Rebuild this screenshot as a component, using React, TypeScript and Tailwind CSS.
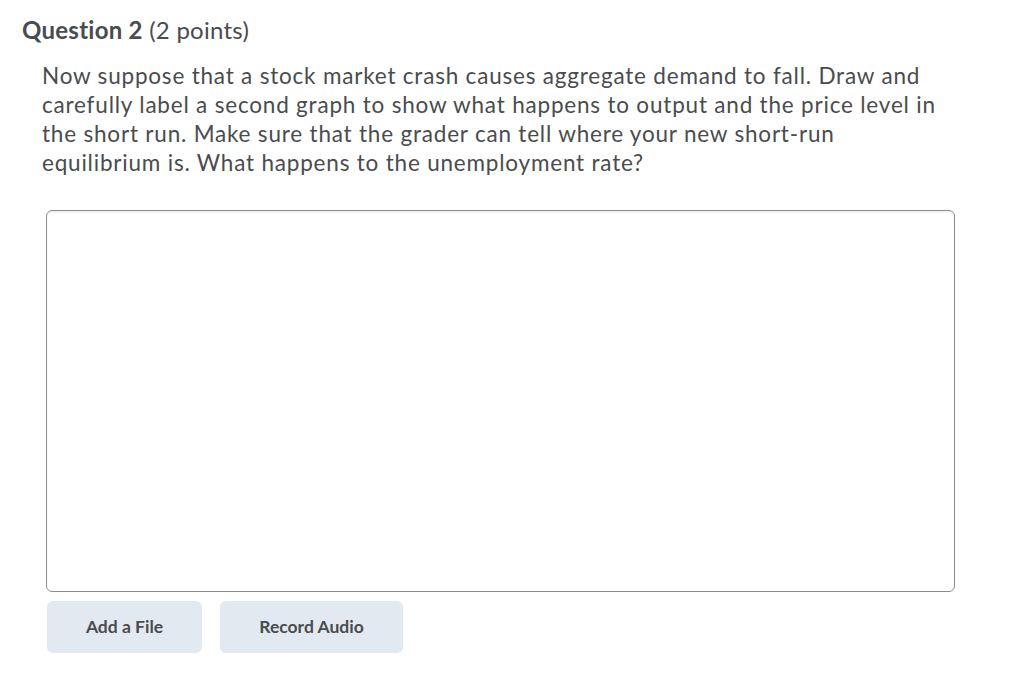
import React from "react";

export default function App() {
  return (
    <div
      className="w-[1024px] h-[685px] bg-white text-[#494c4e] overflow-hidden"
      style={{ fontFamily: "Lato, 'Noto Sans', sans-serif" }}
    >
      <div className="pl-[22px] pt-[15px]">
        <h2 className="text-[24px] leading-[30px] tracking-[0.25px] whitespace-nowrap">
          <span className="font-bold">Question 2</span>{" "}
          <span className="font-normal">(2 points)</span>
        </h2>
      </div>
      <div className="pl-[42px] pt-[16px]">
        <p className="text-[22.5px] leading-[29px] tracking-[0.8px] whitespace-nowrap">
          Now suppose that a stock market crash causes aggregate demand to fall. Draw and
          <br />
          carefully label a second graph to show what happens to output and the price level in
          <br />
          the short run. Make sure that the grader can tell where your new short-run
          <br />
          equilibrium is. What happens to the unemployment rate?
        </p>
      </div>
      <div className="pl-[46px] pt-[33px]">
        <div className="w-[909px] h-[382px] border border-[#8a8d90] rounded-[6px] shadow-[inset_0_2px_2px_rgba(0,0,0,0.06)] bg-white" />
      </div>
      <div className="pl-[47px] pt-[9px] flex gap-[18px]">
        <button className="w-[155px] h-[52px] rounded-[6px] bg-[#e3e9f1] text-[17.5px] font-bold text-[#494c4e] whitespace-nowrap">
          Add a File
        </button>
        <button className="w-[183px] h-[52px] rounded-[6px] bg-[#e3e9f1] text-[17.5px] font-bold text-[#494c4e] whitespace-nowrap">
          Record Audio
        </button>
      </div>
    </div>
  );
}
